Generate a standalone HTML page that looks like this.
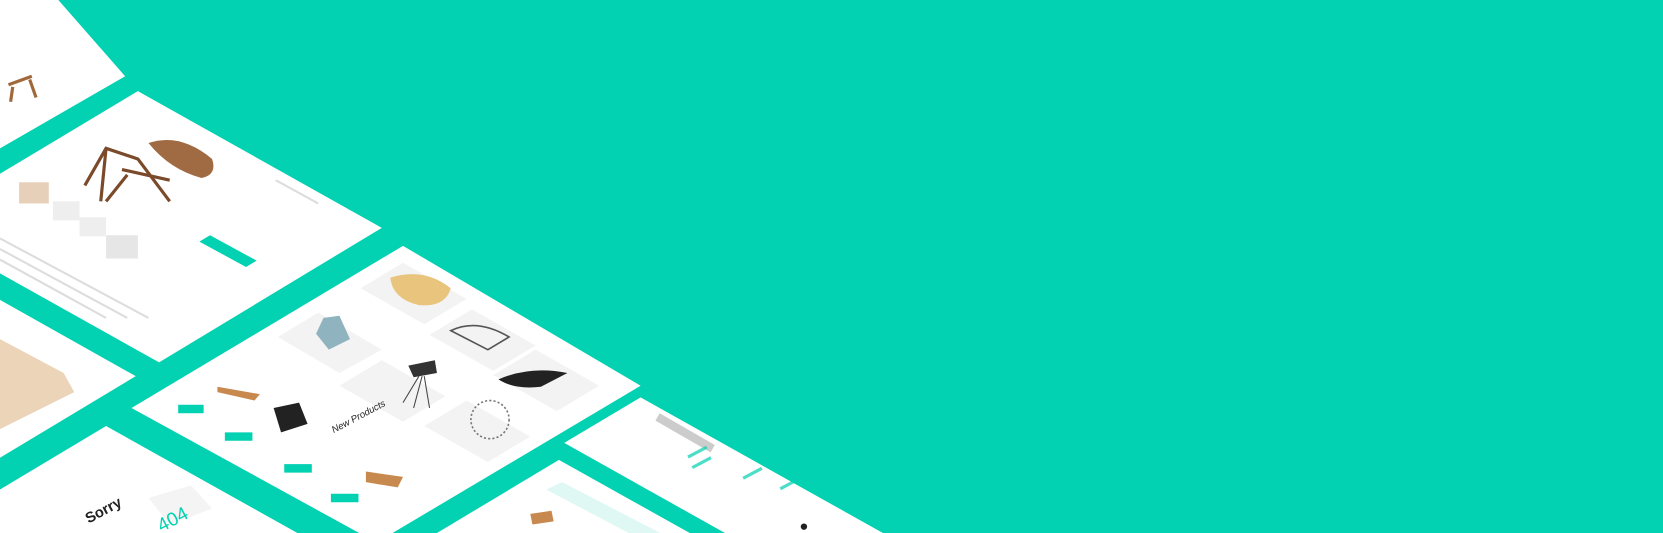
<!DOCTYPE html>
<html><head><meta charset="utf-8"><style>
html,body{margin:0;padding:0;background:#02d1b2;width:1663px;height:533px;overflow:hidden}
svg{display:block}
</style></head><body>
<svg width="1663" height="533" viewBox="0 0 1568 503" preserveAspectRatio="none" xmlns="http://www.w3.org/2000/svg">
<rect width="1568" height="503" fill="#02d1b2"/>
<g fill="#ffffff">
<polygon points="0,0 55,0 118,72 0,140"/>
<polygon points="130,86 360,215 150,342 0,258 0,164"/>
<polygon points="0,283 128,355 0,432"/>
<polygon points="380,232 604,364 355,512 124,385"/>
<polygon points="100,402 334,533 0,533 0,462"/>
<polygon points="604,375 886,533 737,533 532,418"/>
<polygon points="527,434 704,533 362,533"/>
</g>
<g stroke="#a0693c" stroke-width="3" fill="none"><path d="M8,80 L30,72 M12,82 L10,96 M28,75 L34,92"/></g>
<path d="M140,135 Q170,125 200,150 Q205,165 190,168 Q160,160 140,135Z" fill="#a06a42"/>
<g stroke="#7a4a2a" stroke-width="3" fill="none"><path d="M80,175 L100,140 L130,150 L160,190 M100,140 L95,190 M115,160 L160,170 M100,190 L120,165"/></g>
<rect x="18" y="172" width="28" height="20" fill="#d7b08a" opacity=".6"/>
<rect x="50" y="190" width="25" height="18" fill="#eee"/>
<rect x="75" y="205" width="25" height="18" fill="#eee"/>
<rect x="100" y="222" width="30" height="22" fill="#e6e6e6"/>
<polygon points="198,222 242,246 232,252 188,228" fill="#02d1b2"/>
<g stroke="#ddd" stroke-width="2"><path d="M0,225 L140,300 M0,235 L120,300 M0,245 L100,300 M260,170 L300,192"/></g>
<polygon points="0,320 60,352 70,370 0,405" fill="#e7c9a8" opacity=".8"/>
<g fill="#f3f3f3">
<polygon points="380,248 440,282 400,306 340,272"/>
<polygon points="300,295 360,330 320,352 262,318"/>
<polygon points="445,292 505,326 465,350 405,316"/>
<polygon points="360,340 420,374 380,398 320,364"/>
<polygon points="505,330 565,364 525,388 465,354"/>
<polygon points="440,378 500,412 460,436 400,402"/>
</g>
<path d="M368,262 Q400,252 425,272 Q420,290 395,288 Q370,282 368,262Z" fill="#e8c47c"/>
<path d="M305,300 L320,298 L330,320 L310,330 L298,315Z" fill="#8fb4bf"/>
<path d="M425,312 Q450,300 480,318 L460,330 Z" fill="none" stroke="#555" stroke-width="1.5"/>
<path d="M470,358 Q500,345 535,352 L510,365 Q485,368 470,358Z" fill="#222"/>
<path d="M385,345 L410,340 L412,352 L390,356Z" fill="#333"/>
<g stroke="#444" stroke-width="1"><path d="M395,355 L380,380 M400,355 L405,385 M398,355 L390,385"/></g>
<circle cx="462" cy="396" r="18" fill="none" stroke="#777" stroke-width="1.5" stroke-dasharray="2 2"/>
<path d="M205,365 L245,372 L240,378 L205,370Z" fill="#c8894f"/>
<path d="M258,385 L282,380 L290,400 L265,408Z" fill="#222"/>
<path d="M345,445 L380,450 L375,460 L345,455Z" fill="#c8894f"/>
<g fill="#02d1b2">
<polygon points="168,382 192,382 192,390 168,390"/>
<polygon points="212,408 238,408 238,416 212,416"/>
<polygon points="268,438 294,438 294,446 268,446"/>
<polygon points="312,466 338,466 338,474 312,474"/>
</g>
<text x="310" y="400" transform="rotate(-28 330 395)" font-family="Liberation Sans, sans-serif" font-size="9" font-style="italic" fill="#222">New Products</text>
<text x="80" y="490" transform="rotate(-28 90 485)" font-family="Liberation Sans, sans-serif" font-size="14" font-weight="bold" fill="#222">Sorry</text>
<polygon points="140,470 180,458 200,480 160,495" fill="#f4f4f4"/>
<text x="148" y="495" transform="rotate(-28 165 490)" font-family="Liberation Sans, sans-serif" font-size="18" fill="#02d1b2">404</text>
<rect x="622" y="390" width="60" height="8" fill="#ccc" transform="rotate(30 622 390)"/>
<g fill="#02d1b2" opacity=".7">
<rect x="648" y="430" width="20" height="3" transform="rotate(-28 648 430)"/>
<rect x="652" y="440" width="20" height="3" transform="rotate(-28 652 440)"/>
<rect x="700" y="450" width="20" height="3" transform="rotate(-28 700 450)"/>
<rect x="735" y="460" width="20" height="3" transform="rotate(-28 735 460)"/>
</g>
<circle cx="758" cy="497" r="3" fill="#222"/>
<polygon points="530,455 640,512 625,520 515,462" fill="#dff8f3"/>
<path d="M500,485 L520,482 L522,492 L502,495Z" fill="#c8894f"/>
</svg>
</body></html>
